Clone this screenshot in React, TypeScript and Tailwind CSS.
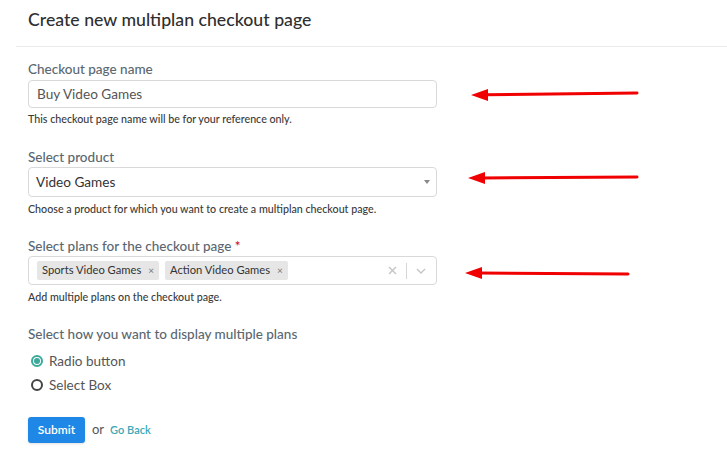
import React from "react";

const font = { fontFamily: "Lato, 'Noto Sans', sans-serif" };

function Arrow({ x1, y1, x2, y2 }: { x1: number; y1: number; x2: number; y2: number }) {
  return (
    <g>
      <line x1={x2 + 14} y1={y2 + (y1 - y2) * 0.08} x2={x1} y2={y1} stroke="#f00000" strokeWidth={3} strokeLinecap="round" />
      <polygon points={`${x2},${y2} ${x2 + 17},${y2 - 6} ${x2 + 17},${y2 + 6}`} fill="#f00000" />
    </g>
  );
}

export default function App() {
  return (
    <div className="relative w-[727px] h-[454px] bg-white overflow-hidden" style={font}>
      <div className="h-[46px] pl-[28px] pt-[8px]">
        <h1 className="text-[17.7px] leading-[24px] text-[#2f2f2f] font-medium">Create new multiplan checkout page</h1>
      </div>
      <div className="ml-[16px] border-t border-[#ebebeb]" />

      <div className="pl-[28px]">
        <div className="w-[409px]">
          <div className="mt-[14px] text-[13.5px] leading-[16px] text-[#5b6770] font-medium">Checkout page name</div>
          <div className="mt-[3px] h-[28px] border border-[#d9d9d9] rounded-[4px] flex items-center px-[8px] text-[13.6px] text-[#555555]">
            Buy Video Games
          </div>
          <div className="mt-[4px] text-[10.7px] leading-[14px] text-[#3a3a3a] font-medium">This checkout page name will be for your reference only.</div>

          <div className="mt-[23px] text-[13.5px] leading-[16px] text-[#5b6770] font-medium">Select product</div>
          <div className="mt-[2px] h-[30px] border border-[#d9d9d9] rounded-[4px] flex items-center justify-between pl-[7px] pr-[6px] text-[13.6px] text-[#333333]">
            <span>Video Games</span>
            <svg width="6" height="4" viewBox="0 0 6 4"><polygon points="0,0 6,0 3,4" fill="#888" /></svg>
          </div>
          <div className="mt-[5px] text-[10.7px] leading-[14px] text-[#3a3a3a] font-medium">Choose a product for which you want to create a multiplan checkout page.</div>

          <div className="mt-[22px] text-[13.5px] leading-[16px] text-[#5b6770] font-medium">
            Select plans for the checkout page <span className="text-[#d0021b]">*</span>
          </div>
          <div className="mt-[2px] h-[29px] border border-[#d9d9d9] rounded-[4px] flex items-center pl-[8px] pr-[8px]">
            <div className="flex gap-[6px] flex-1">
              <span className="h-[19px] bg-[#e6e6e6] rounded-[2px] flex items-center pl-[5px] pr-[5px] text-[11.2px] text-[#333]">
                Sports Video Games<span className="ml-[7px] text-[10px] text-[#777]">×</span>
              </span>
              <span className="h-[19px] bg-[#e6e6e6] rounded-[2px] flex items-center pl-[5px] pr-[5px] text-[11.2px] text-[#333]">
                Action Video Games<span className="ml-[7px] text-[10px] text-[#777]">×</span>
              </span>
            </div>
            <svg width="9" height="9" viewBox="0 0 9 9" className="mr-[9px]"><path d="M1 1 L8 8 M8 1 L1 8" stroke="#c4c4c4" strokeWidth="1.4" /></svg>
            <div className="w-px h-[16px] bg-[#d6d6d6]" />
            <svg width="10" height="6" viewBox="0 0 10 6" className="ml-[9px] mr-[2px]"><path d="M1 1 L5 5 L9 1" stroke="#c4c4c4" strokeWidth="1.3" fill="none" /></svg>
          </div>
          <div className="mt-[5px] text-[10.7px] leading-[14px] text-[#3a3a3a] font-medium">Add multiple plans on the checkout page.</div>

          <div className="mt-[22px] text-[13.5px] leading-[16px] text-[#5b6770] font-medium">Select how you want to display multiple plans</div>
          <div className="mt-[9px] h-[20px] flex items-center pl-[3px] text-[13.5px] text-[#555]">
            <span className="w-[12px] h-[12px] rounded-full border-[2px] border-[#3aa99a] flex items-center justify-center mr-[6px]">
              <span className="w-[6px] h-[6px] rounded-full bg-[#3aa99a]" />
            </span>
            Radio button
          </div>
          <div className="mt-[4px] h-[20px] flex items-center pl-[3px] text-[13.5px] text-[#555]">
            <span className="w-[12px] h-[12px] rounded-full border-[2px] border-[#444] mr-[6px]" />
            Select Box
          </div>

          <div className="mt-[22px] flex items-center">
            <button className="h-[26px] w-[57px] bg-[#1f87e5] rounded-[3px] text-white text-[12px] font-semibold shadow-sm">Submit</button>
            <span className="ml-[7px] text-[13px] text-[#555]">or</span>
            <span className="ml-[6px] text-[11px] text-[#3aa8b6] font-semibold">Go Back</span>
          </div>
        </div>
      </div>

      <svg className="absolute left-0 top-0 pointer-events-none" width="727" height="454">
        <Arrow x1={637} y1={93} x2={471} y2={95} />
        <Arrow x1={637} y1={177} x2={468} y2={178} />
        <Arrow x1={628} y1={274} x2={465} y2={273} />
      </svg>
    </div>
  );
}
